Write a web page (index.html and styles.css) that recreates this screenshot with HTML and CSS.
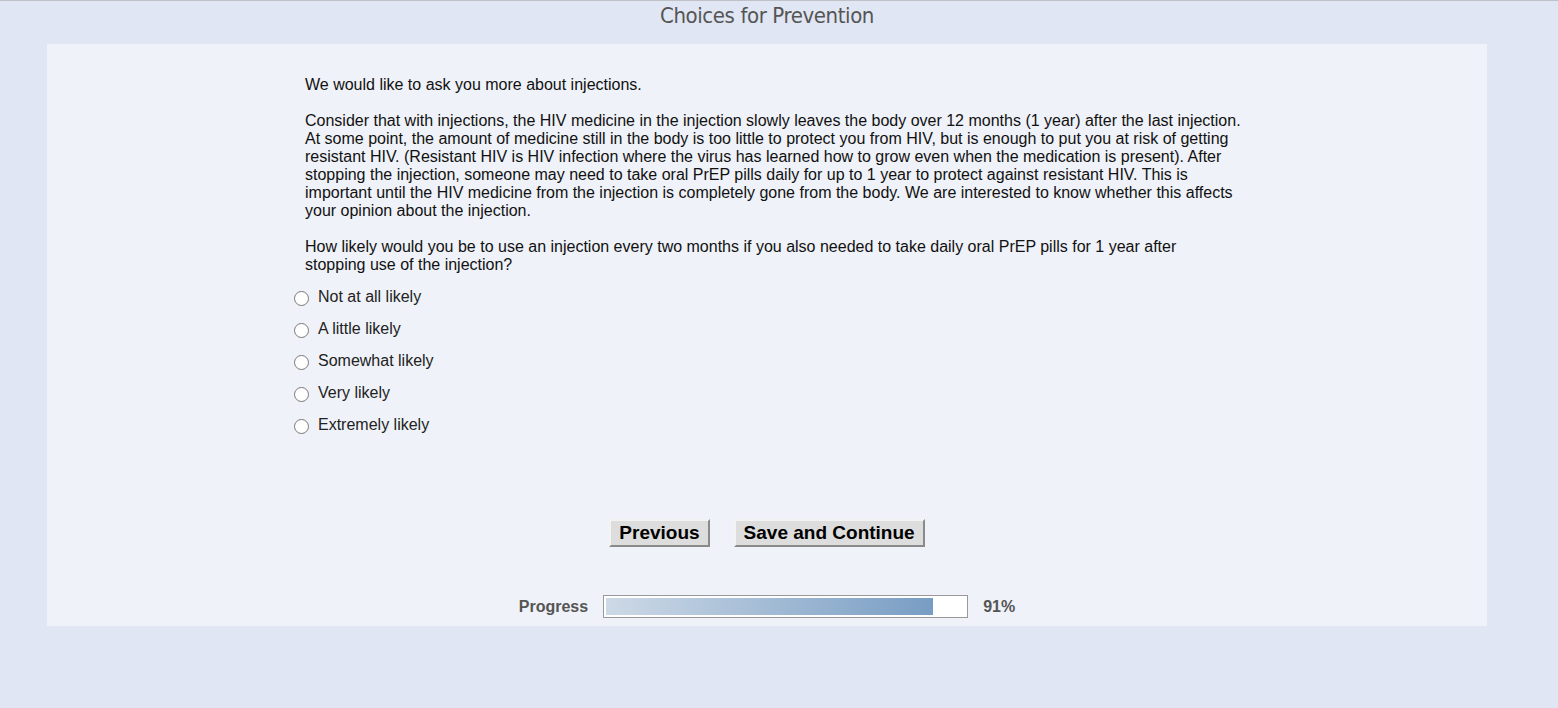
FILE: index.html
```html
<!DOCTYPE html>
<html lang="en">
<head>
    <meta charset="UTF-8">
    <meta name="viewport" content="width=device-width, initial-scale=1.0">
    <title>Choices for Prevention</title>
    <link rel="stylesheet" href="styles.css">
</head>
<body>
    <h1 class="page-title">Choices for Prevention</h1>
    <div class="panel">
        <form class="survey" id="surveyForm">
            <div class="question-text">
                <p>We would like to ask you more about injections.</p>
                <p>Consider that with injections, the HIV medicine in the injection slowly leaves the body over 12 months (1 year) after the last injection. At some point, the amount of medicine still in the body is too little to protect you from HIV, but is enough to put you at risk of getting resistant HIV. (Resistant HIV is HIV infection where the virus has learned how to grow even when the medication is present). After stopping the injection, someone may need to take oral PrEP pills daily for up to 1 year to protect against resistant HIV. This is important until the HIV medicine from the injection is completely gone from the body. We are interested to know whether this affects your opinion about the injection.</p>
                <p class="question">How likely would you be to use an injection every two months if you also needed to take daily oral PrEP pills for 1 year after stopping use of the injection?</p>
            </div>
            <div class="choices">
                <label><input type="radio" name="likely" value="1">Not at all likely</label>
                <label><input type="radio" name="likely" value="2">A little likely</label>
                <label><input type="radio" name="likely" value="3">Somewhat likely</label>
                <label><input type="radio" name="likely" value="4">Very likely</label>
                <label><input type="radio" name="likely" value="5">Extremely likely</label>
            </div>
            <div class="buttons">
                <button type="button">Previous</button>
                <button type="submit">Save and Continue</button>
            </div>
        </form>
        <div class="progress">
            <span class="progress-label">Progress</span>
            <div class="progress-bar">
                <div class="progress-fill" style="width: 91%"></div>
            </div>
            <span class="progress-label">91%</span>
        </div>
    </div>
</body>
</html>
```

FILE: styles.css
```css
html {
    background-color: #E0E6F3;
}

body {
    margin: 0;
    border-top: 1px solid #BFC1C6;
    font-family: "Liberation Sans", Arial, sans-serif;
    color: #111;
}

.page-title {
    width: 1534px;
    margin: 0;
    height: 43px;
    padding-top: 2px;
    box-sizing: border-box;
    text-align: center;
    font-family: "DejaVu Sans Condensed", "DejaVu Sans", sans-serif;
    font-stretch: condensed;
    font-size: 22px;
    font-weight: normal;
    color: #555;
    letter-spacing: -0.4px;
}

.panel {
    width: 1440px;
    margin: 0 0 0 47px;
    background-color: #EFF2F8;
    padding: 32px 0 8px;
    box-sizing: border-box;
    height: 582px;
}

.survey {
    width: 960px;
    margin: 0 auto;
}

.question-text {
    padding-left: 18px;
    width: 955px;
    box-sizing: border-box;
    font-size: 16px;
    line-height: 18px;
}

.question-text p {
    margin: 0 0 18px;
}

.question-text .question {
    max-width: 900px;
    margin-bottom: 7px;
}

.choices label {
    display: flex;
    align-items: center;
    height: 32px;
    padding-left: 6px;
    font-size: 16px;
    color: #222;
}

.choices input[type="radio"] {
    width: 15px;
    height: 15px;
    margin: 2px 9px 0 1px;
}

.buttons {
    display: flex;
    justify-content: center;
    gap: 24px;
    margin-top: 78px;
}

button {
    background-color: #DDDDDD;
    color: #000;
    font-family: "Liberation Sans", Arial, sans-serif;
    font-size: 19px;
    font-weight: bold;
    height: 28px;
    padding: 0 8px;
    border: 2px solid;
    border-color: #F3F3F3 #8A8A8A #8A8A8A #F3F3F3;
    cursor: pointer;
}

.progress {
    display: flex;
    align-items: center;
    justify-content: center;
    gap: 15px;
    margin-top: 48px;
}

.progress-label {
    font-size: 16px;
    font-weight: bold;
    color: #555;
}

.progress-bar {
    width: 365px;
    height: 23px;
    border: 1px solid #999;
    background-color: #fff;
    padding: 2px;
    box-sizing: border-box;
}

.progress-fill {
    height: 100%;
    background: linear-gradient(to right, #CDD9E6, #789DC4);
}
```
